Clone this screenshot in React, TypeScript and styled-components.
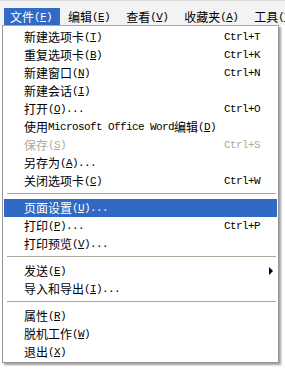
import React from "react";
import styled, { createGlobalStyle } from "styled-components";

const GlobalStyle = createGlobalStyle`
  html, body {
    margin: 0;
    padding: 0;
    background: #ffffff;
  }
  body {
    width: 285px;
    height: 371px;
    overflow: hidden;
    font-family: "Noto Sans CJK SC", "Liberation Sans", sans-serif;
    font-size: 12px;
    color: #000;
  }
`;

const Window = styled.div`
  width: 285px;
  height: 371px;
  overflow: hidden;
  background: #ffffff;
`;

const MenuBar = styled.div`
  display: flex;
  height: 25px;
  padding: 7px 0 0 4px;
  box-sizing: border-box;
  background: #f3f3f3;
  border-top: 1px solid #dcdcdc;
  white-space: nowrap;
  overflow: hidden;
`;

const BarItem = styled.div<{ $open?: boolean }>`
  display: flex;
  align-items: center;
  height: 18px;
  padding: 0 8px 0 6px;
  margin-right: 2px;
  flex: none;
  line-height: 18px;
  background: ${(p) => (p.$open ? "#316ac5" : "transparent")};
  color: ${(p) => (p.$open ? "#ffffff" : "#000000")};
`;

const Dropdown = styled.div`
  width: 277px;
  margin-left: 2px;
  padding: 2px 0 1px;
  box-sizing: border-box;
  background: #ffffff;
  border: 1px solid #979797;
  border-top-color: #a8a8a8;
  box-shadow: 2px 2px 2px rgba(0, 0, 0, 0.38);
`;

const Row = styled.div<{ $active?: boolean; $disabled?: boolean }>`
  display: grid;
  grid-template-columns: 200px 1fr;
  align-items: center;
  height: 18px;
  line-height: 18px;
  padding-left: 20px;
  margin: 0 1px;
  white-space: nowrap;
  background: ${(p) => (p.$active ? "#316ac5" : "transparent")};
  color: ${(p) =>
    p.$active ? "#ffffff" : p.$disabled ? "#aca899" : "#000000"};
`;

const Label = styled.span`
  display: flex;
  align-items: center;
`;

const Shortcut = styled.span`
  display: flex;
  align-items: center;
`;

const Latin = styled.span`
  font-family: "Liberation Mono", "DejaVu Sans Mono", monospace;
  font-size: 11px;
  letter-spacing: -0.6px;
  white-space: pre;
`;

const Arrow = styled.span`
  width: 0;
  height: 0;
  margin-left: 45px;
  border-top: 4px solid transparent;
  border-bottom: 4px solid transparent;
  border-left: 4px solid #000000;
`;

const Separator = styled.div`
  height: 1px;
  margin: 3px 2px 5px 4px;
  background: #aca899;
`;

const isCjk = (s: string) => /[\u3000-\u9fff\uff00-\uffef]/.test(s);

const Accel: React.FC<{ text: string }> = ({ text }) => {
  const idx = text.indexOf("&");
  if (idx < 0) return <>{text}</>;
  return (
    <>
      {text.slice(0, idx)}
      <u>{text.charAt(idx + 1)}</u>
      {text.slice(idx + 2)}
    </>
  );
};

const Text: React.FC<{ value: string }> = ({ value }) => {
  const parts =
    value.match(/[\u3000-\u9fff\uff00-\uffef]+|[^\u3000-\u9fff\uff00-\uffef]+/g) ?? [];
  return (
    <>
      {parts.map((p, i) =>
        isCjk(p) ? (
          <span key={i}>{p}</span>
        ) : (
          <Latin key={i}>
            <Accel text={p} />
          </Latin>
        )
      )}
    </>
  );
};

type Entry =
  | "sep"
  | {
      label: string;
      shortcut?: string;
      disabled?: boolean;
      active?: boolean;
      submenu?: boolean;
    };

const menus = ["文件(&F)", "编辑(&E)", "查看(&V)", "收藏夹(&A)", "工具(&T)"];

const entries: Entry[] = [
  { label: "新建选项卡(&T)", shortcut: "Ctrl+T" },
  { label: "重复选项卡(&B)", shortcut: "Ctrl+K" },
  { label: "新建窗口(&N)", shortcut: "Ctrl+N" },
  { label: "新建会话(&I)" },
  { label: "打开(&O)...", shortcut: "Ctrl+O" },
  { label: "使用Microsoft Office Word编辑(&D)" },
  { label: "保存(&S)", shortcut: "Ctrl+S", disabled: true },
  { label: "另存为(&A)..." },
  { label: "关闭选项卡(&C)", shortcut: "Ctrl+W" },
  "sep",
  { label: "页面设置(&U)...", active: true },
  { label: "打印(&P)...", shortcut: "Ctrl+P" },
  { label: "打印预览(&V)..." },
  "sep",
  { label: "发送(&E)", submenu: true },
  { label: "导入和导出(&I)..." },
  "sep",
  { label: "属性(&R)" },
  { label: "脱机工作(&W)" },
  { label: "退出(&X)" },
];

const App: React.FC = () => {
  return (
    <Window>
      <GlobalStyle />
      <MenuBar>
        {menus.map((m, i) => (
          <BarItem key={m} $open={i === 0}>
            <Text value={m} />
          </BarItem>
        ))}
      </MenuBar>
      <Dropdown>
        {entries.map((e, i) =>
          e === "sep" ? (
            <Separator key={i} />
          ) : (
            <Row key={i} $active={e.active} $disabled={e.disabled}>
              <Label>
                <Text value={e.label} />
              </Label>
              <Shortcut>
                {e.shortcut && <Text value={e.shortcut} />}
                {e.submenu && <Arrow />}
              </Shortcut>
            </Row>
          )
        )}
      </Dropdown>
    </Window>
  );
};

export default App;
